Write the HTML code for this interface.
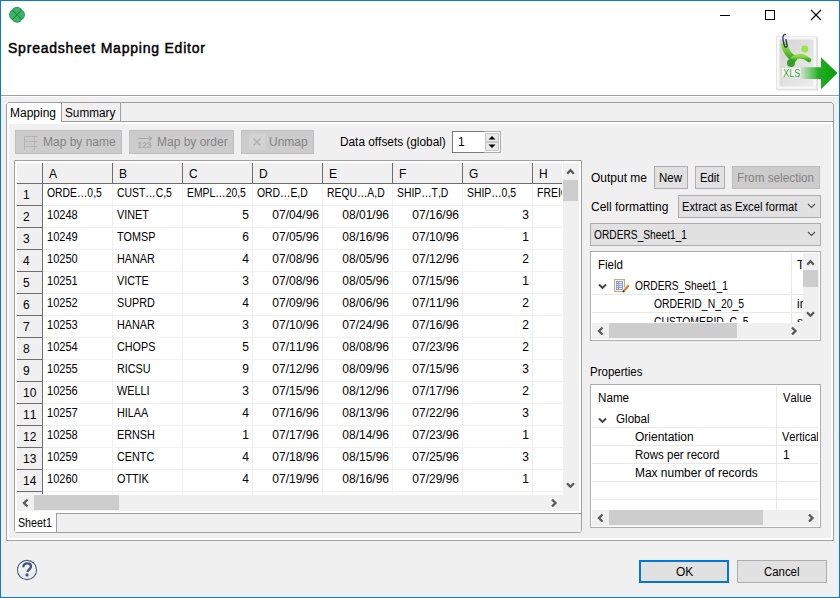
<!DOCTYPE html>
<html><head><meta charset="utf-8">
<style>
*{box-sizing:border-box;margin:0;padding:0}
html,body{width:840px;height:598px;overflow:hidden;background:#fff}
body{position:relative;font-family:"Liberation Sans",sans-serif;font-size:12px;color:#000}
.a{position:absolute}
.t{position:absolute;white-space:pre;line-height:14px;font-kerning:none}
.btn{position:absolute;background:#e1e1e1;border:1px solid #adadad}
.dbtn{position:absolute;background:#cccccc;border:1px solid #bfbfbf}
.dis{color:#838383}
.hl{position:absolute;height:1px}
.vl{position:absolute;width:1px}
</style></head><body>

<div class="a" style="left:0;top:0;width:840px;height:598px;border:1px solid #0c78d4;background:#fff"></div>
<div class="hl" style="left:1px;top:95px;width:838px;background:#a0a0a0"></div>
<div class="hl" style="left:1px;top:96px;width:838px;background:#fff"></div>
<div class="a" style="left:1px;top:97px;width:838px;height:500px;background:#f0f0f0"></div>
<svg class="a" style="left:8px;top:6px" width="18" height="18" viewBox="0 0 18 18">
<g fill="#1c9444"><ellipse cx="9" cy="5.6" rx="5.2" ry="4.7"/><ellipse cx="9" cy="12" rx="5.2" ry="4.7"/><ellipse cx="5.8" cy="8.8" rx="4.7" ry="5.2"/><ellipse cx="12.2" cy="8.8" rx="4.7" ry="5.2"/></g>
<g fill="#3db466"><ellipse cx="9" cy="5.6" rx="4.3" ry="3.8"/><ellipse cx="9" cy="12" rx="4.3" ry="3.8"/><ellipse cx="5.8" cy="8.8" rx="3.8" ry="4.3"/><ellipse cx="12.2" cy="8.8" rx="3.8" ry="4.3"/></g>
<path d="M4.6 4.4L13.4 13.2M13.4 4.4L4.6 13.2" stroke="#1a8a40" stroke-width="1.1"/>
</svg>
<div class="hl" style="left:720px;top:15px;width:10px;background:#000"></div>
<div class="a" style="left:765px;top:10px;width:10px;height:10px;border:1px solid #000"></div>
<svg class="a" style="left:810px;top:9px" width="12" height="12" viewBox="0 0 12 12"><path d="M1 1L11 11M11 1L1 11" stroke="#000" stroke-width="1.1"/></svg>
<div class="t" style="left:8px;top:40px;font-size:14px;letter-spacing:0.78px;-webkit-text-stroke:0.45px #000;line-height:16px">Spreadsheet Mapping Editor</div>
<svg class="a" style="left:772px;top:30px" width="68" height="64" viewBox="0 0 68 64">
<defs>
<linearGradient id="pg" x1="0" y1="0" x2="1" y2="1"><stop offset="0" stop-color="#d4d4d4"/><stop offset="1" stop-color="#ececec"/></linearGradient>
<linearGradient id="ag" x1="0" y1="0" x2="1" y2="0"><stop offset="0" stop-color="#2cb82c" stop-opacity="0"/><stop offset="0.5" stop-color="#22b022"/><stop offset="1" stop-color="#0a9a0a"/></linearGradient>
<linearGradient id="xg" x1="0" y1="0" x2="0" y2="1"><stop offset="0" stop-color="#8edc3a"/><stop offset="1" stop-color="#3aa828"/></linearGradient>
</defs>
<rect x="5" y="7.5" width="41" height="53" fill="#dedede"/>
<rect x="4.5" y="6.7" width="40" height="52.5" fill="#f8f8f8" stroke="#e4e4e4"/>
<rect x="7.5" y="9.5" width="34" height="47" fill="url(#pg)"/>
<g fill="none" stroke="url(#xg)" stroke-linecap="round">
<path d="M12.5 15.5 Q15 25 22 28.5" stroke-width="6.5"/>
<path d="M21 28.5 Q29 23.5 37 30" stroke-width="4.5"/>
</g>
<circle cx="19" cy="33" r="4" fill="#34a02a"/>
<circle cx="32.8" cy="19" r="3.4" fill="#9ee24a"/>
<path d="M14 4.5 C11.5 3.5 10.5 6.5 11 10 L12.5 16 C13.2 17.8 15.5 17.3 15.2 15.5 L13.8 9" fill="none" stroke="#24306e" stroke-width="1.3"/>
<rect x="10" y="38" width="19" height="9" fill="#f4f4f4"/>
<text x="11.3" y="46.6" font-family="Liberation Sans" font-size="10.5" fill="#35a035" textLength="17" lengthAdjust="spacingAndGlyphs">XLS</text>
<path d="M27 37.2 H49 V27.2 L65.5 43 L49 59.2 V48.9 H27Z" fill="url(#ag)"/>
</svg>
<div class="a" style="left:6px;top:121px;width:828px;height:420px;border:1px solid #a0a0a0;border-top:none"></div>
<div class="a" style="left:7px;top:122px;width:826px;height:418px;border:2px solid #fff;background:#f0f0f0"></div>
<div class="hl" style="left:6px;top:121px;width:828px;background:#a0a0a0"></div>
<div class="hl" style="left:8px;top:102px;width:824px;background:#a0a0a0"></div>
<div class="vl" style="left:833px;top:104px;height:18px;background:#a0a0a0"></div>
<div class="vl" style="left:6px;top:104px;height:18px;background:#a0a0a0"></div>
<div class="a" style="left:7px;top:103px;width:1px;height:1px;background:#a0a0a0"></div>
<div class="a" style="left:832px;top:103px;width:1px;height:1px;background:#a0a0a0"></div>
<div class="a" style="left:7px;top:103px;width:54px;height:21px;background:#fff"></div>
<div class="a" style="left:7px;top:103px;width:1px;height:1px;background:#d0d0d0"></div>
<div class="vl" style="left:61px;top:103px;height:19px;background:#a0a0a0"></div>
<div class="vl" style="left:120px;top:103px;height:19px;background:#a0a0a0"></div>
<div class="t" style="left:10px;top:106px">Mapping</div>
<div class="t" style="left:65px;top:106px;transform:scaleX(0.98);transform-origin:left top">Summary</div>
<div class="dbtn" style="left:15px;top:130px;width:107px;height:24px"></div>
<svg class="a" style="left:23px;top:135px" width="16" height="16" viewBox="0 0 16 16" fill="none" stroke="#b4b4b4">
<path d="M1.5 1.5H14.5M1.5 6.5H14.5M1.5 11.5H14.5M1.5 1V15M11.5 1V15"/><path d="M3 4H10M3 9H10" stroke="#c4c4c4"/></svg>
<div class="t dis" style="left:43px;top:135px">Map by name</div>
<div class="dbtn" style="left:129px;top:130px;width:105px;height:24px"></div>
<svg class="a" style="left:137px;top:135px" width="16" height="16" viewBox="0 0 16 16" fill="none" stroke="#b4b4b4">
<path d="M1 3.5H14.5M12 1.2L14.5 3.5L12 5.8" stroke="#a8a8a8" stroke-width="1.2"/><text x="0.5" y="12.5" font-family="Liberation Sans" font-size="8.2" font-weight="bold" fill="#aaaaaa" stroke="none" textLength="14" lengthAdjust="spacingAndGlyphs">123</text></svg>
<div class="t dis" style="left:157px;top:135px">Map by order</div>
<div class="dbtn" style="left:241px;top:130px;width:73px;height:24px"></div>
<svg class="a" style="left:249px;top:134px" width="16" height="16" viewBox="0 0 16 16" fill="none" stroke="#b0b0b0" stroke-width="1.2">
<rect x="0" y="0" width="16" height="16" fill="#d3d3d3" stroke="none"/><path d="M4.5 4.5L11.5 11.5M11.5 4.5L4.5 11.5" stroke-width="1.4"/></svg>
<div class="t dis" style="left:269px;top:135px">Unmap</div>
<div class="t" style="left:340px;top:135px;transform:scaleX(0.985);transform-origin:left top">Data offsets (global)</div>
<div class="a" style="left:452px;top:131px;width:49px;height:22px;background:#fff;border:1px solid #7a7a7a;border-right-color:#adadad"></div>
<div class="a" style="left:484px;top:131px;width:17px;height:22px;border:1px solid #adadad;border-left:none;background:#fff"></div>
<div class="a" style="left:485px;top:133px;width:14px;height:9px;background:#e8e8e8;border:1px solid #c8c8c8"></div>
<div class="a" style="left:485px;top:142px;width:14px;height:9px;background:#e8e8e8;border:1px solid #c8c8c8"></div>
<svg class="a" style="left:488px;top:135px" width="8" height="14" viewBox="0 0 8 14"><path d="M0.5 4.5L4 1L7.5 4.5Z M0.5 9.5L4 13L7.5 9.5Z" fill="#000"/></svg>
<div class="t" style="left:458px;top:135px">1</div>
<div class="a" style="left:14px;top:160px;width:568px;height:373px;border:1px solid #a0a0a0;background:#fff;border-radius:0 0 3px 3px"></div>
<div class="a" style="left:17px;top:163px;width:545px;height:20px;background:#f0f0f0"></div>
<div class="a" style="left:17px;top:163px;width:25px;height:331px;background:#f0f0f0"></div>
<div class="hl" style="left:17px;top:183px;width:545px;background:#6e6e6e"></div>
<div class="vl" style="left:42px;top:163px;height:331px;background:#6e6e6e"></div>
<div class="vl" style="left:112px;top:163px;height:20px;background:#6e6e6e"></div>
<div class="vl" style="left:112px;top:184px;height:310px;background:#f0f0f0"></div>
<div class="vl" style="left:182px;top:163px;height:20px;background:#6e6e6e"></div>
<div class="vl" style="left:182px;top:184px;height:310px;background:#f0f0f0"></div>
<div class="vl" style="left:252px;top:163px;height:20px;background:#6e6e6e"></div>
<div class="vl" style="left:252px;top:184px;height:310px;background:#f0f0f0"></div>
<div class="vl" style="left:322px;top:163px;height:20px;background:#6e6e6e"></div>
<div class="vl" style="left:322px;top:184px;height:310px;background:#f0f0f0"></div>
<div class="vl" style="left:392px;top:163px;height:20px;background:#6e6e6e"></div>
<div class="vl" style="left:392px;top:184px;height:310px;background:#f0f0f0"></div>
<div class="vl" style="left:462px;top:163px;height:20px;background:#6e6e6e"></div>
<div class="vl" style="left:462px;top:184px;height:310px;background:#f0f0f0"></div>
<div class="vl" style="left:532px;top:163px;height:20px;background:#6e6e6e"></div>
<div class="vl" style="left:532px;top:184px;height:310px;background:#f0f0f0"></div>
<div class="hl" style="left:17px;top:205px;width:25px;background:#6e6e6e"></div>
<div class="hl" style="left:43px;top:205px;width:520px;background:#f0f0f0"></div>
<div class="hl" style="left:17px;top:227px;width:25px;background:#6e6e6e"></div>
<div class="hl" style="left:43px;top:227px;width:520px;background:#f0f0f0"></div>
<div class="hl" style="left:17px;top:249px;width:25px;background:#6e6e6e"></div>
<div class="hl" style="left:43px;top:249px;width:520px;background:#f0f0f0"></div>
<div class="hl" style="left:17px;top:271px;width:25px;background:#6e6e6e"></div>
<div class="hl" style="left:43px;top:271px;width:520px;background:#f0f0f0"></div>
<div class="hl" style="left:17px;top:293px;width:25px;background:#6e6e6e"></div>
<div class="hl" style="left:43px;top:293px;width:520px;background:#f0f0f0"></div>
<div class="hl" style="left:17px;top:315px;width:25px;background:#6e6e6e"></div>
<div class="hl" style="left:43px;top:315px;width:520px;background:#f0f0f0"></div>
<div class="hl" style="left:17px;top:337px;width:25px;background:#6e6e6e"></div>
<div class="hl" style="left:43px;top:337px;width:520px;background:#f0f0f0"></div>
<div class="hl" style="left:17px;top:359px;width:25px;background:#6e6e6e"></div>
<div class="hl" style="left:43px;top:359px;width:520px;background:#f0f0f0"></div>
<div class="hl" style="left:17px;top:381px;width:25px;background:#6e6e6e"></div>
<div class="hl" style="left:43px;top:381px;width:520px;background:#f0f0f0"></div>
<div class="hl" style="left:17px;top:403px;width:25px;background:#6e6e6e"></div>
<div class="hl" style="left:43px;top:403px;width:520px;background:#f0f0f0"></div>
<div class="hl" style="left:17px;top:425px;width:25px;background:#6e6e6e"></div>
<div class="hl" style="left:43px;top:425px;width:520px;background:#f0f0f0"></div>
<div class="hl" style="left:17px;top:447px;width:25px;background:#6e6e6e"></div>
<div class="hl" style="left:43px;top:447px;width:520px;background:#f0f0f0"></div>
<div class="hl" style="left:17px;top:469px;width:25px;background:#6e6e6e"></div>
<div class="hl" style="left:43px;top:469px;width:520px;background:#f0f0f0"></div>
<div class="hl" style="left:17px;top:491px;width:25px;background:#6e6e6e"></div>
<div class="hl" style="left:43px;top:491px;width:520px;background:#f0f0f0"></div>
<div class="t" style="left:49px;top:167px">A</div>
<div class="t" style="left:119px;top:167px">B</div>
<div class="t" style="left:189px;top:167px">C</div>
<div class="t" style="left:259px;top:167px">D</div>
<div class="t" style="left:329px;top:167px">E</div>
<div class="t" style="left:399px;top:167px">F</div>
<div class="t" style="left:469px;top:167px">G</div>
<div class="t" style="left:539px;top:167px">H</div>
<div class="t" style="left:23px;top:188px">1</div>
<div class="t" style="left:23px;top:210px">2</div>
<div class="t" style="left:23px;top:232px">3</div>
<div class="t" style="left:23px;top:254px">4</div>
<div class="t" style="left:23px;top:276px">5</div>
<div class="t" style="left:23px;top:298px">6</div>
<div class="t" style="left:23px;top:320px">7</div>
<div class="t" style="left:23px;top:342px">8</div>
<div class="t" style="left:23px;top:364px">9</div>
<div class="t" style="left:23px;top:386px">10</div>
<div class="t" style="left:23px;top:408px">11</div>
<div class="t" style="left:23px;top:430px">12</div>
<div class="t" style="left:23px;top:452px">13</div>
<div class="t" style="left:23px;top:474px">14</div>
<div class="t" style="left:47px;top:186px;transform:scaleX(0.865);transform-origin:left top">ORDE…0,5</div>
<div class="t" style="left:117px;top:186px;transform:scaleX(0.865);transform-origin:left top">CUST…C,5</div>
<div class="t" style="left:187px;top:186px;transform:scaleX(0.865);transform-origin:left top">EMPL…20,5</div>
<div class="t" style="left:257px;top:186px;transform:scaleX(0.865);transform-origin:left top">ORD…E,D</div>
<div class="t" style="left:327px;top:186px;transform:scaleX(0.865);transform-origin:left top">REQU…A,D</div>
<div class="t" style="left:397px;top:186px;transform:scaleX(0.865);transform-origin:left top">SHIP…T,D</div>
<div class="t" style="left:467px;top:186px;transform:scaleX(0.865);transform-origin:left top">SHIP…0,5</div>
<div class="a" style="left:537px;top:184px;width:25px;height:21px;overflow:hidden"><div class="t" style="left:0px;top:2px;transform:scaleX(0.87);transform-origin:left top">FREIGH</div></div>
<div class="t" style="left:47px;top:208px;transform:scaleX(0.92);transform-origin:left top">10248</div>
<div class="t" style="left:117px;top:208px;transform:scaleX(0.9);transform-origin:left top">VINET</div>
<div class="t" style="right:591px;top:208px">5</div>
<div class="t" style="right:521px;top:208px">07/04/96</div>
<div class="t" style="right:451px;top:208px">08/01/96</div>
<div class="t" style="right:381px;top:208px">07/16/96</div>
<div class="t" style="right:311px;top:208px">3</div>
<div class="t" style="left:47px;top:230px;transform:scaleX(0.92);transform-origin:left top">10249</div>
<div class="t" style="left:117px;top:230px;transform:scaleX(0.9);transform-origin:left top">TOMSP</div>
<div class="t" style="right:591px;top:230px">6</div>
<div class="t" style="right:521px;top:230px">07/05/96</div>
<div class="t" style="right:451px;top:230px">08/16/96</div>
<div class="t" style="right:381px;top:230px">07/10/96</div>
<div class="t" style="right:311px;top:230px">1</div>
<div class="t" style="left:47px;top:252px;transform:scaleX(0.92);transform-origin:left top">10250</div>
<div class="t" style="left:117px;top:252px;transform:scaleX(0.9);transform-origin:left top">HANAR</div>
<div class="t" style="right:591px;top:252px">4</div>
<div class="t" style="right:521px;top:252px">07/08/96</div>
<div class="t" style="right:451px;top:252px">08/05/96</div>
<div class="t" style="right:381px;top:252px">07/12/96</div>
<div class="t" style="right:311px;top:252px">2</div>
<div class="t" style="left:47px;top:274px;transform:scaleX(0.92);transform-origin:left top">10251</div>
<div class="t" style="left:117px;top:274px;transform:scaleX(0.9);transform-origin:left top">VICTE</div>
<div class="t" style="right:591px;top:274px">3</div>
<div class="t" style="right:521px;top:274px">07/08/96</div>
<div class="t" style="right:451px;top:274px">08/05/96</div>
<div class="t" style="right:381px;top:274px">07/15/96</div>
<div class="t" style="right:311px;top:274px">1</div>
<div class="t" style="left:47px;top:296px;transform:scaleX(0.92);transform-origin:left top">10252</div>
<div class="t" style="left:117px;top:296px;transform:scaleX(0.9);transform-origin:left top">SUPRD</div>
<div class="t" style="right:591px;top:296px">4</div>
<div class="t" style="right:521px;top:296px">07/09/96</div>
<div class="t" style="right:451px;top:296px">08/06/96</div>
<div class="t" style="right:381px;top:296px">07/11/96</div>
<div class="t" style="right:311px;top:296px">2</div>
<div class="t" style="left:47px;top:318px;transform:scaleX(0.92);transform-origin:left top">10253</div>
<div class="t" style="left:117px;top:318px;transform:scaleX(0.9);transform-origin:left top">HANAR</div>
<div class="t" style="right:591px;top:318px">3</div>
<div class="t" style="right:521px;top:318px">07/10/96</div>
<div class="t" style="right:451px;top:318px">07/24/96</div>
<div class="t" style="right:381px;top:318px">07/16/96</div>
<div class="t" style="right:311px;top:318px">2</div>
<div class="t" style="left:47px;top:340px;transform:scaleX(0.92);transform-origin:left top">10254</div>
<div class="t" style="left:117px;top:340px;transform:scaleX(0.9);transform-origin:left top">CHOPS</div>
<div class="t" style="right:591px;top:340px">5</div>
<div class="t" style="right:521px;top:340px">07/11/96</div>
<div class="t" style="right:451px;top:340px">08/08/96</div>
<div class="t" style="right:381px;top:340px">07/23/96</div>
<div class="t" style="right:311px;top:340px">2</div>
<div class="t" style="left:47px;top:362px;transform:scaleX(0.92);transform-origin:left top">10255</div>
<div class="t" style="left:117px;top:362px;transform:scaleX(0.9);transform-origin:left top">RICSU</div>
<div class="t" style="right:591px;top:362px">9</div>
<div class="t" style="right:521px;top:362px">07/12/96</div>
<div class="t" style="right:451px;top:362px">08/09/96</div>
<div class="t" style="right:381px;top:362px">07/15/96</div>
<div class="t" style="right:311px;top:362px">3</div>
<div class="t" style="left:47px;top:384px;transform:scaleX(0.92);transform-origin:left top">10256</div>
<div class="t" style="left:117px;top:384px;transform:scaleX(0.9);transform-origin:left top">WELLI</div>
<div class="t" style="right:591px;top:384px">3</div>
<div class="t" style="right:521px;top:384px">07/15/96</div>
<div class="t" style="right:451px;top:384px">08/12/96</div>
<div class="t" style="right:381px;top:384px">07/17/96</div>
<div class="t" style="right:311px;top:384px">2</div>
<div class="t" style="left:47px;top:406px;transform:scaleX(0.92);transform-origin:left top">10257</div>
<div class="t" style="left:117px;top:406px;transform:scaleX(0.9);transform-origin:left top">HILAA</div>
<div class="t" style="right:591px;top:406px">4</div>
<div class="t" style="right:521px;top:406px">07/16/96</div>
<div class="t" style="right:451px;top:406px">08/13/96</div>
<div class="t" style="right:381px;top:406px">07/22/96</div>
<div class="t" style="right:311px;top:406px">3</div>
<div class="t" style="left:47px;top:428px;transform:scaleX(0.92);transform-origin:left top">10258</div>
<div class="t" style="left:117px;top:428px;transform:scaleX(0.9);transform-origin:left top">ERNSH</div>
<div class="t" style="right:591px;top:428px">1</div>
<div class="t" style="right:521px;top:428px">07/17/96</div>
<div class="t" style="right:451px;top:428px">08/14/96</div>
<div class="t" style="right:381px;top:428px">07/23/96</div>
<div class="t" style="right:311px;top:428px">1</div>
<div class="t" style="left:47px;top:450px;transform:scaleX(0.92);transform-origin:left top">10259</div>
<div class="t" style="left:117px;top:450px;transform:scaleX(0.9);transform-origin:left top">CENTC</div>
<div class="t" style="right:591px;top:450px">4</div>
<div class="t" style="right:521px;top:450px">07/18/96</div>
<div class="t" style="right:451px;top:450px">08/15/96</div>
<div class="t" style="right:381px;top:450px">07/25/96</div>
<div class="t" style="right:311px;top:450px">3</div>
<div class="t" style="left:47px;top:472px;transform:scaleX(0.92);transform-origin:left top">10260</div>
<div class="t" style="left:117px;top:472px;transform:scaleX(0.9);transform-origin:left top">OTTIK</div>
<div class="t" style="right:591px;top:472px">4</div>
<div class="t" style="right:521px;top:472px">07/19/96</div>
<div class="t" style="right:451px;top:472px">08/16/96</div>
<div class="t" style="right:381px;top:472px">07/29/96</div>
<div class="t" style="right:311px;top:472px">1</div>
<div class="a" style="left:563px;top:163px;width:16px;height:348px;background:#f0f0f0"></div>
<div class="a" style="left:17px;top:495px;width:546px;height:16px;background:#f0f0f0"></div>
<div class="a" style="left:563px;top:180px;width:15px;height:21px;background:#cdcdcd"></div>
<div class="a" style="left:34px;top:495px;width:85px;height:15px;background:#cdcdcd"></div>
<svg class="a" style="left:566px;top:166px" width="9" height="9" viewBox="0 0 9 9"><path d="M1.2 7.8L4.5 4.3L7.8 7.8" fill="none" stroke="#5a5a5a" stroke-width="2.3"/></svg>
<svg class="a" style="left:566px;top:479px" width="9" height="9" viewBox="0 0 9 9"><path d="M1 4.3L4.5 7.8L8 4.3" fill="none" stroke="#5a5a5a" stroke-width="2.3"/></svg>
<svg class="a" style="left:21px;top:498px" width="9" height="9" viewBox="0 0 9 9"><path d="M6.5 1.5L3 5L6.5 8.5" fill="none" stroke="#5a5a5a" stroke-width="2.3"/></svg>
<svg class="a" style="left:549px;top:498px" width="9" height="9" viewBox="0 0 9 9"><path d="M3 1.5L6.5 5L3 8.5" fill="none" stroke="#5a5a5a" stroke-width="2.3"/></svg>
<div class="hl" style="left:56px;top:513px;width:525px;background:#a0a0a0"></div>
<div class="a" style="left:15px;top:514px;width:566px;height:18px;background:#f0f0f0"></div>
<div class="a" style="left:15px;top:514px;width:41px;height:18px;background:#fff"></div>
<div class="vl" style="left:56px;top:514px;height:18px;background:#a0a0a0"></div>
<div class="t" style="left:18px;top:516px;transform:scaleX(0.89);transform-origin:left top">Sheet1</div>
<div class="t" style="left:591px;top:171px">Output me</div>
<div class="btn" style="left:654px;top:166px;width:34px;height:23px"></div>
<div class="t" style="left:659px;top:171px;transform:scaleX(0.96);transform-origin:left top">New</div>
<div class="btn" style="left:695px;top:166px;width:30px;height:23px"></div>
<div class="t" style="left:700px;top:171px;transform:scaleX(0.94);transform-origin:left top">Edit</div>
<div class="dbtn" style="left:732px;top:166px;width:88px;height:23px"></div>
<div class="t dis" style="left:737px;top:171px;transform:scaleX(0.98);transform-origin:left top">From selection</div>
<div class="t" style="left:591px;top:200px">Cell formatting</div>
<div class="btn" style="left:678px;top:195px;width:143px;height:23px"></div>
<div class="t" style="left:682px;top:200px;transform:scaleX(0.935);transform-origin:left top">Extract as Excel format</div>
<svg class="a" style="left:807px;top:201px" width="9" height="9" viewBox="0 0 9 9"><path d="M1 3L4.5 6.5L8 3" fill="none" stroke="#505050" stroke-width="1.1"/></svg>
<div class="btn" style="left:590px;top:223px;width:231px;height:23px"></div>
<div class="t" style="left:594px;top:228px;transform:scaleX(0.85);transform-origin:left top">ORDERS_Sheet1_1</div>
<svg class="a" style="left:807px;top:229px" width="9" height="9" viewBox="0 0 9 9"><path d="M1 3L4.5 6.5L8 3" fill="none" stroke="#505050" stroke-width="1.1"/></svg>
<div class="a" style="left:590px;top:251px;width:231px;height:90px;border:1px solid #abadb3;background:#fff"></div>
<div class="vl" style="left:791px;top:253px;height:70px;background:#e8e8e8"></div>
<div class="hl" style="left:592px;top:294px;width:211px;background:#e8e8e8"></div>
<div class="hl" style="left:592px;top:312px;width:211px;background:#e8e8e8"></div>
<div class="t" style="left:598px;top:258px;transform:scaleX(0.96);transform-origin:left top">Field</div>
<div class="a" style="left:792px;top:253px;width:10px;height:20px;overflow:hidden"><div class="t" style="left:5px;top:5px">Type</div></div>
<svg class="a" style="left:598px;top:282px" width="9" height="9" viewBox="0 0 9 9"><path d="M1 2.5L4.5 6L8 2.5" fill="none" stroke="#404040" stroke-width="1.9"/></svg>
<svg class="a" style="left:613px;top:278px" width="18" height="16" viewBox="0 0 18 16">
<rect x="1.5" y="1.5" width="10" height="12" fill="#eef0f8" stroke="#c0b080"/>
<rect x="3" y="3" width="7" height="9" fill="#8ea2cc"/>
<path d="M4 4.5H5M4 6.5H5M4 8.5H5M4 10.5H5M6 4.5H9M6 6.5H9M6 8.5H9M6 10.5H9" stroke="#eef2ff" stroke-width="0.9"/>
<path d="M10.2 13.8L15.8 7.2" stroke="#fff" stroke-width="3.4"/>
<path d="M10.2 13.8L15.8 7.2" stroke="#d8842c" stroke-width="2.2"/><path d="M10 14L11 12.8" stroke="#202020" stroke-width="1.5"/>
</svg>
<div class="t" style="left:635px;top:279px;transform:scaleX(0.85);transform-origin:left top">ORDERS_Sheet1_1</div>
<div class="t" style="left:654px;top:297px;transform:scaleX(0.865);transform-origin:left top">ORDERID_N_20_5</div>
<div class="a" style="left:792px;top:295px;width:11px;height:17px;overflow:hidden"><div class="t" style="left:5px;top:2px">integer</div></div>
<div class="a" style="left:592px;top:313px;width:211px;height:9px;overflow:hidden"><div class="t" style="left:62px;top:2px;transform:scaleX(0.865);transform-origin:left top">CUSTOMERID_C_5</div><div class="a" style="left:200px;top:0;width:11px;height:17px;overflow:hidden"><div class="t" style="left:5px;top:2px">string</div></div></div>
<div class="a" style="left:803px;top:253px;width:16px;height:70px;background:#f0f0f0"></div>
<div class="a" style="left:803px;top:270px;width:15px;height:17px;background:#cdcdcd"></div>
<div class="a" style="left:592px;top:323px;width:227px;height:16px;background:#f0f0f0"></div>
<div class="a" style="left:609px;top:323px;width:128px;height:15px;background:#cdcdcd"></div>
<svg class="a" style="left:806px;top:257px" width="9" height="9" viewBox="0 0 9 9"><path d="M1.2 7.8L4.5 4.3L7.8 7.8" fill="none" stroke="#5a5a5a" stroke-width="2.3"/></svg>
<svg class="a" style="left:806px;top:308px" width="9" height="9" viewBox="0 0 9 9"><path d="M1 4.3L4.5 7.8L8 4.3" fill="none" stroke="#5a5a5a" stroke-width="2.3"/></svg>
<svg class="a" style="left:596px;top:326px" width="9" height="9" viewBox="0 0 9 9"><path d="M6.5 1.5L3 5L6.5 8.5" fill="none" stroke="#5a5a5a" stroke-width="2.3"/></svg>
<svg class="a" style="left:789px;top:326px" width="9" height="9" viewBox="0 0 9 9"><path d="M3 1.5L6.5 5L3 8.5" fill="none" stroke="#5a5a5a" stroke-width="2.3"/></svg>
<div class="t" style="left:590px;top:365px;transform:scaleX(0.96);transform-origin:left top">Properties</div>
<div class="a" style="left:590px;top:384px;width:231px;height:144px;border:1px solid #abadb3;background:#fff"></div>
<div class="vl" style="left:776px;top:386px;height:124px;background:#e8e8e8"></div>
<div class="hl" style="left:592px;top:427px;width:226px;background:#e8e8e8"></div>
<div class="hl" style="left:592px;top:445px;width:226px;background:#e8e8e8"></div>
<div class="hl" style="left:592px;top:463px;width:226px;background:#e8e8e8"></div>
<div class="hl" style="left:592px;top:481px;width:226px;background:#e8e8e8"></div>
<div class="hl" style="left:592px;top:499px;width:226px;background:#e8e8e8"></div>
<div class="t" style="left:598px;top:391px;transform:scaleX(0.97);transform-origin:left top">Name</div>
<div class="t" style="left:783px;top:391px;transform:scaleX(0.93);transform-origin:left top">Value</div>
<svg class="a" style="left:598px;top:416px" width="9" height="9" viewBox="0 0 9 9"><path d="M1 2.5L4.5 6L8 2.5" fill="none" stroke="#404040" stroke-width="1.9"/></svg>
<div class="t" style="left:616px;top:412px;transform:scaleX(0.97);transform-origin:left top">Global</div>
<div class="t" style="left:635px;top:430px">Orientation</div>
<div class="a" style="left:777px;top:428px;width:41px;height:17px;overflow:hidden"><div class="t" style="left:5px;top:2px;transform:scaleX(0.92);transform-origin:left top">Vertical</div></div>
<div class="t" style="left:635px;top:448px;transform:scaleX(0.96);transform-origin:left top">Rows per record</div>
<div class="t" style="left:783px;top:448px">1</div>
<div class="t" style="left:635px;top:466px;transform:scaleX(0.995);transform-origin:left top">Max number of records</div>
<div class="a" style="left:592px;top:510px;width:227px;height:16px;background:#f0f0f0"></div>
<div class="a" style="left:609px;top:510px;width:154px;height:15px;background:#cdcdcd"></div>
<svg class="a" style="left:596px;top:513px" width="9" height="9" viewBox="0 0 9 9"><path d="M6.5 1.5L3 5L6.5 8.5" fill="none" stroke="#5a5a5a" stroke-width="2.3"/></svg>
<svg class="a" style="left:806px;top:513px" width="9" height="9" viewBox="0 0 9 9"><path d="M3 1.5L6.5 5L3 8.5" fill="none" stroke="#5a5a5a" stroke-width="2.3"/></svg>
<svg class="a" style="left:16px;top:559px" width="23" height="23" viewBox="0 0 23 23">
<defs><linearGradient id="hg" x1="0" y1="0" x2="0" y2="1"><stop offset="0" stop-color="#fafafa"/><stop offset="1" stop-color="#e6e6e6"/></linearGradient></defs>
<circle cx="11" cy="11" r="9.6" fill="url(#hg)" stroke="#4a6088" stroke-width="1.1"/>
<path d="M7.3 8.2C7.3 5.5 9.3 4.4 11.4 4.4C13.7 4.4 15 5.8 15 7.6C15 9.9 12.2 10.6 11.4 12.9" fill="none" stroke="#3e5680" stroke-width="2.4"/>
<circle cx="11" cy="15.9" r="1.6" fill="#3e5680"/>
</svg>
<div class="a" style="left:639px;top:560px;width:90px;height:23px;background:#e1e1e1;border:2px solid #0078d7"></div>
<div class="t" style="left:676px;top:565px">OK</div>
<div class="btn" style="left:737px;top:560px;width:90px;height:23px"></div>
<div class="t" style="left:764px;top:565px;transform:scaleX(0.95);transform-origin:left top">Cancel</div>
</body></html>
